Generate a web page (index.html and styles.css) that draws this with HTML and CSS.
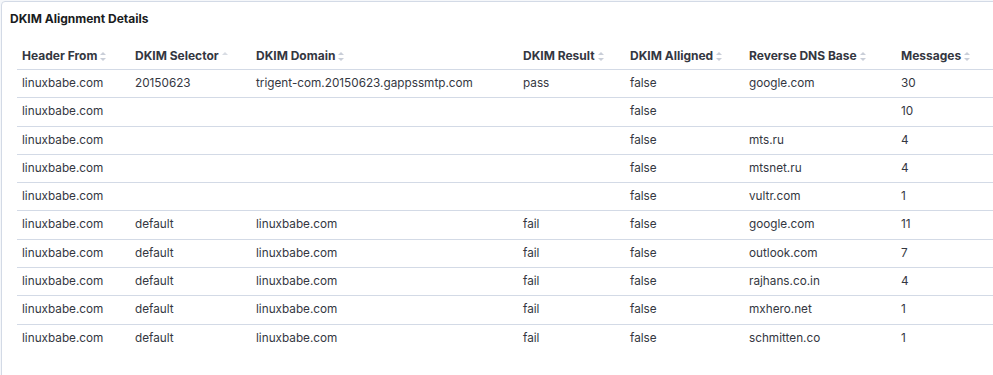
FILE: index.html
```html
<!DOCTYPE html>
<html>
<head>
<meta charset="utf-8">
<link rel="stylesheet" href="styles.css">
</head>
<body>
<div class="panel">
  <h2 class="title">DKIM Alignment Details</h2>
  <table class="tbl">
    <colgroup>
      <col class="c1"><col class="c2"><col class="c3"><col class="c4"><col class="c5"><col class="c6"><col class="c7">
    </colgroup>
    <thead>
      <tr>
        <th>Header From<span class="sort"></span></th>
        <th>DKIM Selector<span class="sort up"></span></th>
        <th>DKIM Domain<span class="sort"></span></th>
        <th>DKIM Result<span class="sort"></span></th>
        <th>DKIM Alligned<span class="sort"></span></th>
        <th>Reverse DNS Base<span class="sort"></span></th>
        <th>Messages<span class="sort"></span></th>
      </tr>
    </thead>
    <tbody>
      <tr><td>linuxbabe.com</td><td>20150623</td><td>trigent-com.20150623.gappssmtp.com</td><td>pass</td><td>false</td><td>google.com</td><td>30</td></tr>
      <tr><td>linuxbabe.com</td><td></td><td></td><td></td><td>false</td><td></td><td>10</td></tr>
      <tr><td>linuxbabe.com</td><td></td><td></td><td></td><td>false</td><td>mts.ru</td><td>4</td></tr>
      <tr><td>linuxbabe.com</td><td></td><td></td><td></td><td>false</td><td>mtsnet.ru</td><td>4</td></tr>
      <tr><td>linuxbabe.com</td><td></td><td></td><td></td><td>false</td><td>vultr.com</td><td>1</td></tr>
      <tr><td>linuxbabe.com</td><td>default</td><td>linuxbabe.com</td><td>fail</td><td>false</td><td>google.com</td><td>11</td></tr>
      <tr><td>linuxbabe.com</td><td>default</td><td>linuxbabe.com</td><td>fail</td><td>false</td><td>outlook.com</td><td>7</td></tr>
      <tr><td>linuxbabe.com</td><td>default</td><td>linuxbabe.com</td><td>fail</td><td>false</td><td>rajhans.co.in</td><td>4</td></tr>
      <tr><td>linuxbabe.com</td><td>default</td><td>linuxbabe.com</td><td>fail</td><td>false</td><td>mxhero.net</td><td>1</td></tr>
      <tr><td>linuxbabe.com</td><td>default</td><td>linuxbabe.com</td><td>fail</td><td>false</td><td>schmitten.co</td><td>1</td></tr>
    </tbody>
  </table>
</div>
</body>
</html>
```
FILE: styles.css
```css
html, body {
  margin: 0;
  padding: 0;
  background: #f5f7fa;
  overflow: hidden;
  height: 375px;
}
body {
  padding: 1px 0 0 1px;
  font-family: Inter, "Noto Sans", sans-serif;
  color: #343741;
}
.panel {
  width: 1010px;
  height: 420px;
  background: #fff;
  border: 1px solid #d3dae6;
  border-radius: 4px;
  box-sizing: border-box;
  padding: 9px 0 0 15px;
}
.title {
  margin: 0 0 0 -7px;
  font-size: 12px;
  font-weight: 700;
  color: #1a1c21;
  line-height: 16px;
}
.tbl {
  margin-top: 14px;
  width: 990px;
  border-collapse: collapse;
  table-layout: fixed;
  font-size: 11.75px;
}
.c1 { width: 113px; }
.c2 { width: 121px; }
.c3 { width: 267px; }
.c4 { width: 107px; }
.c5 { width: 119px; }
.c6 { width: 152px; }
.c7 { width: auto; }
.tbl th {
  text-align: left;
  font-weight: 700;
  font-size: 12px;
  color: #343741;
  padding: 7px 5px 6px;
  line-height: 15px;
  border-bottom: 1px solid #d3dae6;
  white-space: nowrap;
}
.tbl td {
  padding: 6px 5px 6px;
  line-height: 15.3px;
  border-bottom: 1px solid #d3dae6;
  white-space: nowrap;
}
.tbl tbody tr:last-child td {
  border-bottom: none;
}
.sort {
  display: inline-block;
  position: relative;
  width: 7px;
  height: 9px;
  margin-left: 3px;
  vertical-align: -1px;
}
.sort::before,
.sort::after {
  content: "";
  position: absolute;
  left: 0;
  border-left: 3.5px solid transparent;
  border-right: 3.5px solid transparent;
}
.sort::before {
  top: 0;
  border-bottom: 3.5px solid #c9ced8;
}
.sort::after {
  bottom: 0;
  border-top: 3.5px solid #c9ced8;
}
.sort.up::before {
  border-bottom-color: #d8dce3;
}
.sort.up::after {
  display: none;
}
```
